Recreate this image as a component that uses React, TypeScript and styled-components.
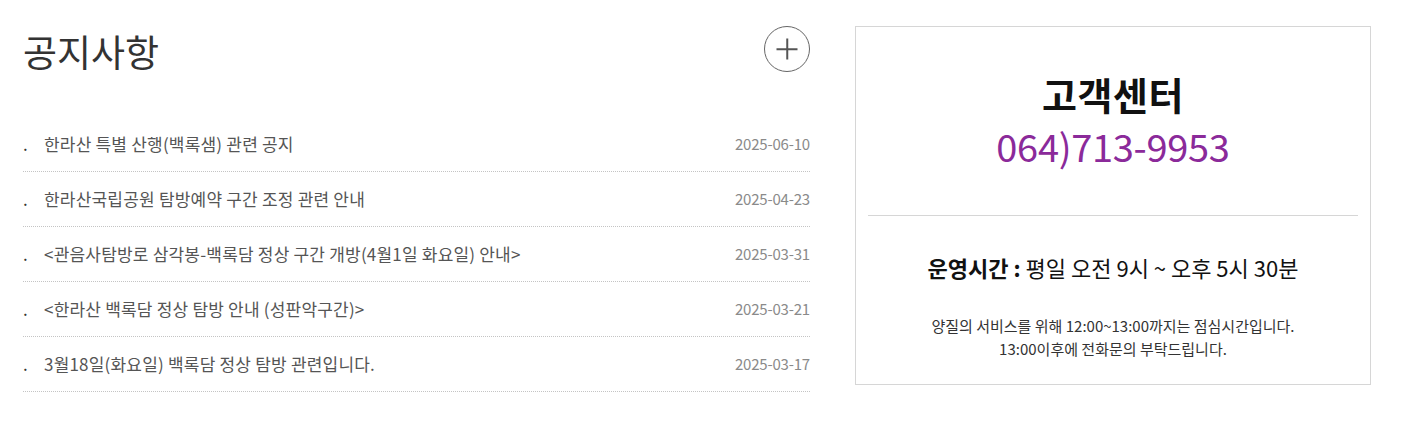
import React from "react";
import styled, { createGlobalStyle } from "styled-components";

const GlobalStyle = createGlobalStyle`
    body {
        margin: 0;
        background: #fff;
        font-family: "Noto Sans CJK KR", "Noto Sans", sans-serif;
    }
`;

const Page = styled.div`
    display: flex;
    align-items: flex-start;
    gap: 45px;
    padding: 26px 0 0 23px;
`;

const Notice = styled.section`
    width: 787px;
`;

const Header = styled.div`
    display: flex;
    justify-content: space-between;
    align-items: flex-start;
    height: 91px;
`;

const Title = styled.h2`
    margin: 0;
    font-size: 37px;
    font-weight: 400;
    line-height: 50px;
    color: #333;
`;

const MoreButton = styled.button`
    position: relative;
    width: 46px;
    height: 46px;
    padding: 0;
    border: 1.5px solid #666;
    border-radius: 50%;
    background: #fff;
    cursor: pointer;

    &::before,
    &::after {
        content: "";
        position: absolute;
        left: 50%;
        top: 50%;
        background: #555;
        transform: translate(-50%, -50%);
    }
    &::before {
        width: 21px;
        height: 1.5px;
    }
    &::after {
        width: 1.5px;
        height: 21px;
    }
`;

const List = styled.ul`
    list-style: none;
    margin: 0;
    padding: 0;
`;

const Row = styled.li`
    display: flex;
    align-items: center;
    height: 54px;
    padding-bottom: 2px;
    box-sizing: border-box;
    border-bottom: 1px dotted #c4c4c4;
    font-size: 17px;
    height: 55px;
`;

const Bullet = styled.span`
    width: 21px;
    color: #333;
`;

const Subject = styled.a`
    flex: 1;
    color: #555;
    text-decoration: none;
    letter-spacing: 0.2px;
`;

const Date = styled.span`
    color: #8a8a8a;
    font-size: 15px;
    letter-spacing: -0.2px;
`;

const Center = styled.aside`
    box-sizing: border-box;
    width: 516px;
    height: 359px;
    border: 1px solid #d6d6d6;
    text-align: center;
`;

const CenterTop = styled.div`
    padding: 44px 0 40px;
`;

const CenterTitle = styled.h3`
    margin: 0;
    font-size: 38px;
    font-weight: 700;
    line-height: 46px;
    color: #111;
    letter-spacing: 0.5px;
`;

const Phone = styled.p`
    margin: 0;
    font-size: 38px;
    line-height: 58px;
    color: #8b2a9a;
    letter-spacing: -0.3px;
`;

const Divider = styled.hr`
    margin: 0 12px;
    border: 0;
    border-top: 1px solid #d6d6d6;
`;

const Hours = styled.p`
    margin: 36px 0 0;
    font-size: 22px;
    line-height: 30px;
    color: #111;

    strong {
        font-weight: 700;
    }
`;

const Note = styled.p`
    margin: 32px 0 0;
    font-size: 15px;
    line-height: 23px;
    color: #333;
`;

const notices = [
    { title: "한라산 특별 산행(백록샘) 관련 공지", date: "2025-06-10" },
    { title: "한라산국립공원 탐방예약 구간 조정 관련 안내", date: "2025-04-23" },
    { title: "<관음사탐방로 삼각봉-백록담 정상 구간 개방(4월1일 화요일) 안내>", date: "2025-03-31" },
    { title: "<한라산 백록담 정상 탐방 안내 (성판악구간)>", date: "2025-03-21" },
    { title: "3월18일(화요일) 백록담 정상 탐방 관련입니다.", date: "2025-03-17" },
];

const App: React.FC = () => (
    <>
        <GlobalStyle />
        <Page>
            <Notice>
                <Header>
                    <Title>공지사항</Title>
                    <MoreButton aria-label="더보기" />
                </Header>
                <List>
                    {notices.map((n) => (
                        <Row key={n.date}>
                            <Bullet>.</Bullet>
                            <Subject href="#">{n.title}</Subject>
                            <Date>{n.date}</Date>
                        </Row>
                    ))}
                </List>
            </Notice>
            <Center>
                <CenterTop>
                    <CenterTitle>고객센터</CenterTitle>
                    <Phone>064)713-9953</Phone>
                </CenterTop>
                <Divider />
                <Hours>
                    <strong>운영시간 :</strong> 평일 오전 9시 ~ 오후 5시 30분
                </Hours>
                <Note>
                    양질의 서비스를 위해 12:00~13:00까지는 점심시간입니다.
                    <br />
                    13:00이후에 전화문의 부탁드립니다.
                </Note>
            </Center>
        </Page>
    </>
);

export default App;
